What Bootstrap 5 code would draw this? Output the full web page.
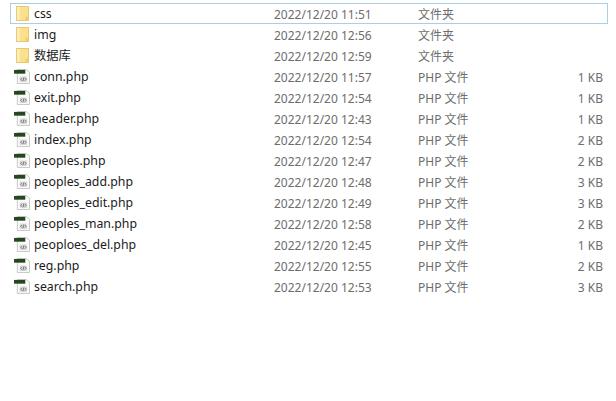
<!DOCTYPE html>
<html lang="zh">
<head>
<meta charset="utf-8">
<title>文件列表</title>
<link href="https://cdn.jsdelivr.net/npm/bootstrap@5.3.0/dist/css/bootstrap.min.css" rel="stylesheet">
<style>
html,body{background:#fff;height:100%;overflow:hidden}
body{font-family:"Noto Sans","Noto Sans CJK SC",sans-serif;font-size:12px;line-height:1}
.file-list{padding:3px 8px 0 10px}
.file-row{height:21px;border:1px solid transparent;padding-left:5px;padding-right:4px}
.file-row.is-focus{border-color:#a9cfe3}
.file-ico{width:18px;flex:none}
.file-ico .php-ico{margin-left:-2px}
.file-txt{padding-top:2px}
.file-name{width:240px;flex:none;color:#1a1a1a;font-size:12.3px}
.file-date{width:144px;flex:none;color:#6d6d6d}
.file-type{width:120px;flex:none;color:#6d6d6d}
.file-size{color:#6d6d6d;flex:1;text-align:right}
</style>
</head>
<body>
<svg width="0" height="0" class="d-block">
<defs>
<symbol id="ico-folder" viewBox="0 0 14 16">
<rect x="0.500" y="0.500" width="13" height="15" fill="#fbe08f" stroke="#e6c66c"/>
<rect x="1" y="1" width="3" height="14" fill="#fdeeb8"/>
<path d="M10 15V11.500h3V15z" fill="#f5cd60"/>
</symbol>
<symbol id="ico-php" viewBox="0 0 17 16">
<path d="M3.500 0.500H13l3.500 3V15.500H3.500z" fill="#fbfbfb" stroke="#c4c4c4"/>
<rect x="0" y="1" width="12" height="4" fill="#24481c"/>
<rect x="6" y="8" width="8" height="6" fill="#dcdcdc"/>
<path d="M8.500 9.500L7 11l1.500 1.500M11.500 9.500L13 11l-1.500 1.500M10.500 9l-1 4" fill="none" stroke="#555" stroke-width=".8"/>
</symbol>
</defs>
</svg>
<div class="file-list" id="list"></div>
<script>
const files=[
["css","2022/12/20 11:51","文件夹","",1],
["img","2022/12/20 12:56","文件夹","",1],
["数据库","2022/12/20 12:59","文件夹","",1],
["conn.php","2022/12/20 11:57","PHP 文件","1 KB"],
["exit.php","2022/12/20 12:54","PHP 文件","1 KB"],
["header.php","2022/12/20 12:43","PHP 文件","1 KB"],
["index.php","2022/12/20 12:54","PHP 文件","2 KB"],
["peoples.php","2022/12/20 12:47","PHP 文件","2 KB"],
["peoples_add.php","2022/12/20 12:48","PHP 文件","3 KB"],
["peoples_edit.php","2022/12/20 12:49","PHP 文件","3 KB"],
["peoples_man.php","2022/12/20 12:58","PHP 文件","2 KB"],
["peoploes_del.php","2022/12/20 12:45","PHP 文件","1 KB"],
["reg.php","2022/12/20 12:55","PHP 文件","2 KB"],
["search.php","2022/12/20 12:53","PHP 文件","3 KB"]];
document.getElementById('list').innerHTML=files.map((f,i)=>`<div class="file-row d-flex align-items-center${i==0?' is-focus':''}">
<span class="file-ico d-flex">${f[4]?'<svg width="13" height="15"><use href="#ico-folder"/></svg>':'<svg class="php-ico" width="16" height="15"><use href="#ico-php"/></svg>'}</span>
<span class="file-name file-txt">${f[0]}</span><span class="file-date file-txt">${f[1]}</span><span class="file-type file-txt">${f[2]}</span><span class="file-size file-txt">${f[3]}</span></div>`).join('');
</script>
<script src="https://cdn.jsdelivr.net/npm/bootstrap@5.3.0/dist/js/bootstrap.bundle.min.js"></script>
</body>
</html>
